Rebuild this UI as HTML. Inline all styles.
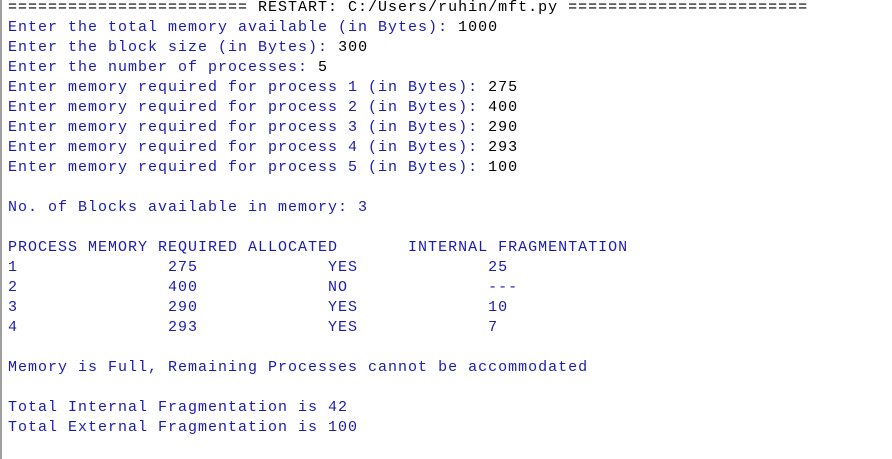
<!DOCTYPE html>
<html><head><style>
html,body{margin:0;padding:0;background:#fff;width:892px;height:459px;overflow:hidden}
.l{position:absolute;left:0;top:0;width:2px;height:459px;background:#a0a0a0}
pre{position:absolute;left:8px;top:-2px;margin:0;font-family:"Liberation Mono","Courier New",monospace;font-size:15px;letter-spacing:1px;line-height:20px;color:#1c1cb4}
b{font-weight:normal;color:#000}
</style></head><body><div class="l"></div>
<pre><b>======================== RESTART: C:/Users/ruhin/mft.py ========================</b>
Enter the total memory available (in Bytes): <b>1000</b>
Enter the block size (in Bytes): <b>300</b>
Enter the number of processes: <b>5</b>
Enter memory required for process 1 (in Bytes): <b>275</b>
Enter memory required for process 2 (in Bytes): <b>400</b>
Enter memory required for process 3 (in Bytes): <b>290</b>
Enter memory required for process 4 (in Bytes): <b>293</b>
Enter memory required for process 5 (in Bytes): <b>100</b>

No. of Blocks available in memory: 3

PROCESS MEMORY REQUIRED ALLOCATED       INTERNAL FRAGMENTATION
1               275             YES             25
2               400             NO              ---
3               290             YES             10
4               293             YES             7

Memory is Full, Remaining Processes cannot be accommodated

Total Internal Fragmentation is 42
Total External Fragmentation is 100</pre>
</body></html>
